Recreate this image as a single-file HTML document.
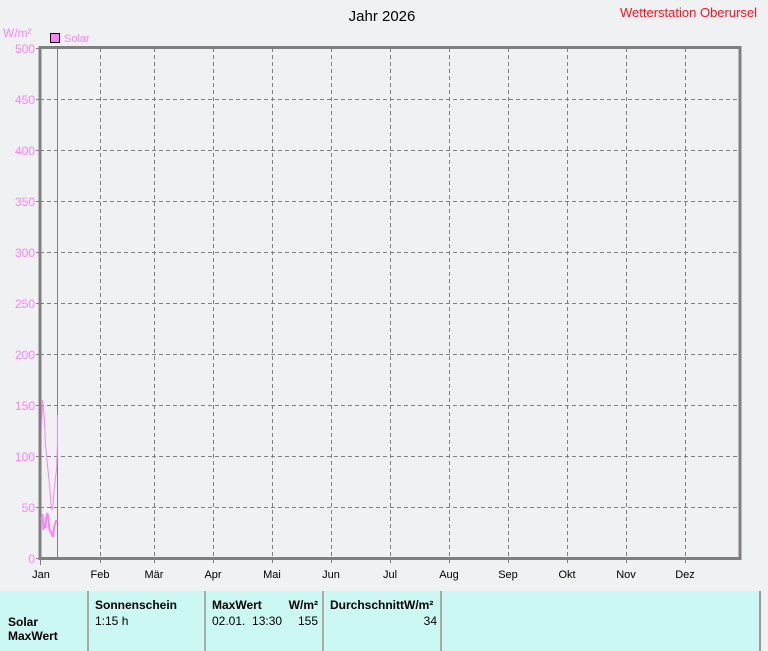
<!DOCTYPE html>
<html><head><meta charset="utf-8"><style>
body{margin:0;width:768px;height:641px;background:#f0f1f3;overflow:hidden;font-family:"Liberation Sans",Arial,sans-serif;position:relative}
svg{position:absolute;left:0;top:0}
.tb{position:absolute;left:0;top:591px;width:759px;height:60px;background:#ccf8f4;border-right:2px solid #999;font-size:12px}
.c{position:absolute;top:0;height:60px;border-left:2px solid #aaa}
b{font-weight:bold}
</style></head><body>
<svg width="768" height="591" font-family="Liberation Sans, Arial, sans-serif">
<text x="382" y="21" font-size="15" text-anchor="middle" fill="#000">Jahr 2026</text>
<text x="620" y="17" font-size="13" fill="#ff1020">Wetterstation Oberursel</text>
<text x="3" y="37" font-size="12" fill="#ff80ff">W/m²</text>
<rect x="50.5" y="33.5" width="9" height="9" fill="#ff80ff" stroke="#000"/>
<text x="64" y="42" font-size="11" fill="#ff80ff">Solar</text>
<g stroke="#808080" stroke-dasharray="4,3" stroke-width="1">
<line x1="40" x2="740" y1="99.5" y2="99.5"/><line x1="40" x2="740" y1="150.5" y2="150.5"/><line x1="40" x2="740" y1="201.5" y2="201.5"/><line x1="40" x2="740" y1="252.5" y2="252.5"/><line x1="40" x2="740" y1="303.5" y2="303.5"/><line x1="40" x2="740" y1="354.5" y2="354.5"/><line x1="40" x2="740" y1="405.5" y2="405.5"/><line x1="40" x2="740" y1="456.5" y2="456.5"/><line x1="40" x2="740" y1="507.5" y2="507.5"/>
<line x1="100.5" x2="100.5" y1="48" y2="565"/><line x1="154.5" x2="154.5" y1="48" y2="565"/><line x1="213.5" x2="213.5" y1="48" y2="565"/><line x1="272.5" x2="272.5" y1="48" y2="565"/><line x1="331.5" x2="331.5" y1="48" y2="565"/><line x1="390.5" x2="390.5" y1="48" y2="565"/><line x1="449.5" x2="449.5" y1="48" y2="565"/><line x1="508.5" x2="508.5" y1="48" y2="565"/><line x1="567.5" x2="567.5" y1="48" y2="565"/><line x1="626.5" x2="626.5" y1="48" y2="565"/><line x1="685.5" x2="685.5" y1="48" y2="565"/>
</g>
<line x1="57.5" x2="57.5" y1="48" y2="558" stroke="#808080"/>
<g stroke="#808080"><line x1="36" x2="40" y1="48.5" y2="48.5"/><line x1="36" x2="40" y1="99.5" y2="99.5"/><line x1="36" x2="40" y1="150.5" y2="150.5"/><line x1="36" x2="40" y1="201.5" y2="201.5"/><line x1="36" x2="40" y1="252.5" y2="252.5"/><line x1="36" x2="40" y1="303.5" y2="303.5"/><line x1="36" x2="40" y1="354.5" y2="354.5"/><line x1="36" x2="40" y1="405.5" y2="405.5"/><line x1="36" x2="40" y1="456.5" y2="456.5"/><line x1="36" x2="40" y1="507.5" y2="507.5"/><line x1="36" x2="40" y1="558.5" y2="558.5"/><line x1="40.5" x2="40.5" y1="558" y2="565"/></g>
<rect x="40" y="47.5" width="700" height="511" fill="none" stroke="#808080" stroke-width="3"/>
<polyline fill="none" stroke="#ff80ff" stroke-width="1" points="41.5,427 42.5,400 43.5,410 44.5,420 45.5,445 47,460 48,470 49,480 50,490 51,505 52,510 53,505 54,492 55.5,478 56.5,470 57.5,445 57.5,415"/>
<polyline fill="none" stroke="#ff80ff" stroke-width="2" points="41.5,520 42.5,514 43.5,530 44.5,523 45.5,528 46.5,516 47.5,513 48.5,520 49.5,530 51,532 53,537 54,528 55,524 56,521 57.5,521"/>
<g font-size="12" fill="#ff80ff" text-anchor="end">
<text x="35" y="53">500</text><text x="35" y="104">450</text><text x="35" y="155">400</text><text x="35" y="206">350</text><text x="35" y="257">300</text><text x="35" y="308">250</text><text x="35" y="359">200</text><text x="35" y="410">150</text><text x="35" y="461">100</text><text x="35" y="512">50</text><text x="35" y="563">0</text>
</g>
<g font-size="11" fill="#000" text-anchor="middle">
<text x="41" y="578">Jan</text><text x="100" y="578">Feb</text><text x="154" y="578">Mär</text><text x="213" y="578">Apr</text><text x="272" y="578">Mai</text><text x="331" y="578">Jun</text><text x="390" y="578">Jul</text><text x="449" y="578">Aug</text><text x="508" y="578">Sep</text><text x="567" y="578">Okt</text><text x="626" y="578">Nov</text><text x="685" y="578">Dez</text>
</g>
</svg>
<div class="tb">
<div style="position:absolute;left:8px;top:24px"><b>Solar</b></div>
<div style="position:absolute;left:8px;top:38px"><b>MaxWert</b></div>
<div class="c" style="left:87px;width:116px"><div style="position:absolute;left:6px;top:7px"><b>Sonnenschein</b></div><div style="position:absolute;left:6px;top:23px">1:15 h</div></div>
<div class="c" style="left:204px;width:116px"><div style="position:absolute;left:6px;top:7px"><b>MaxWert</b></div><div style="position:absolute;right:4px;top:7px"><b>W/m²</b></div><div style="position:absolute;left:6px;top:23px">02.01.&nbsp; 13:30</div><div style="position:absolute;right:4px;top:23px">155</div></div>
<div class="c" style="left:322px;width:117px"><div style="position:absolute;left:6px;top:7px"><b>DurchschnittW/m²</b></div><div style="position:absolute;right:4px;top:23px">34</div></div>
<div class="c" style="left:440px;width:1px"></div>
</div>
</body></html>
